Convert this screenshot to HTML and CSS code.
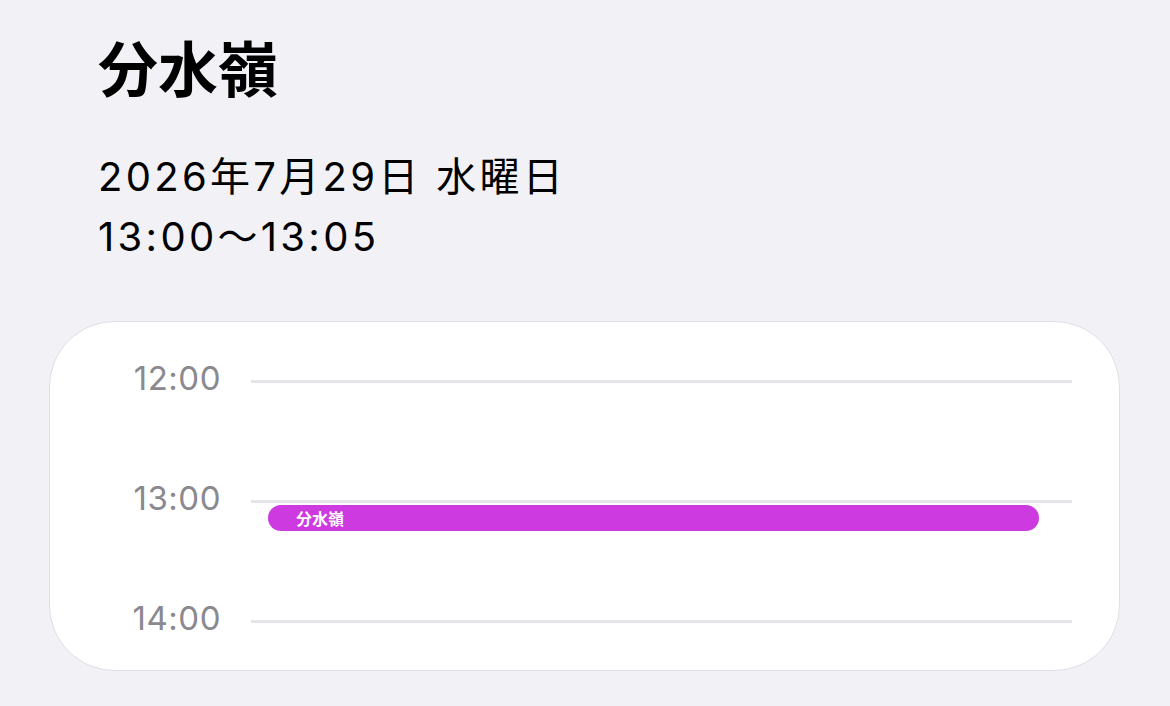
FILE: index.html
```html
<!DOCTYPE html>
<html lang="ja">
<head>
<meta charset="utf-8">
<link rel="stylesheet" href="styles.css">
</head>
<body>
<div class="page">
  <header class="head">
    <h1 class="title">分水嶺</h1>
    <p class="date">2026年7月29日 水曜日</p>
    <p class="time">13:00〜13:05</p>
  </header>
  <section class="card">
    <div class="timeline">
      <div class="row"><span class="hour">12:00</span><span class="line"></span></div>
      <div class="row"><span class="hour">13:00</span><span class="line"></span></div>
      <div class="row"><span class="hour">14:00</span><span class="line"></span></div>
      <div class="event">分水嶺</div>
    </div>
  </section>
</div>
</body>
</html>
```
FILE: styles.css
```css
html, body {
  margin: 0;
  padding: 0;
  background: #f2f1f6;
}
body {
  font-family: "Noto Sans CJK JP", "Liberation Sans", sans-serif;
  color: #000;
  width: 1170px;
  height: 706px;
  overflow: hidden;
}
.page {
  display: flex;
  flex-direction: column;
}
.head {
  padding: 0 0 0 98px;
}
.title {
  margin: 0;
  padding-top: 20px;
  font-size: 60px;
  font-weight: 700;
  line-height: 92px;
  letter-spacing: 0;
}
.date, .time {
  margin: 0;
  font-family: "Inter", "Noto Sans CJK JP", sans-serif;
  font-size: 40px;
  font-weight: 400;
  line-height: 60px;
  letter-spacing: 3.3px;
}
.date {
  margin-top: 35px;
}
.card {
  margin: 54px 0 0 49px;
  width: 1069px;
  height: 348px;
  background: #fff;
  border: 1px solid #e0dfe4;
  border-radius: 66px;
  box-sizing: content-box;
}
.timeline {
  position: relative;
  padding-top: 39px;
  display: flex;
  flex-direction: column;
  gap: 80px;
}
.row {
  display: flex;
  align-items: center;
  height: 40px;
  gap: 30px;
}
.hour {
  width: 171px;
  text-align: right;
  font-family: "Inter", "Liberation Sans", sans-serif;
  font-size: 33px;
  color: #8a898f;
  letter-spacing: 0.5px;
  margin-top: -6px;
}
.line {
  flex: 1;
  height: 3px;
  margin-right: 47px;
  background: #e4e3e7;
}
.event {
  position: absolute;
  top: 183px;
  left: 218px;
  right: 80px;
  height: 26px;
  border-radius: 13px;
  background: #cc3ae0;
  color: #fff;
  font-size: 16px;
  font-weight: 700;
  line-height: 26px;
  padding-left: 28px;
}
```
